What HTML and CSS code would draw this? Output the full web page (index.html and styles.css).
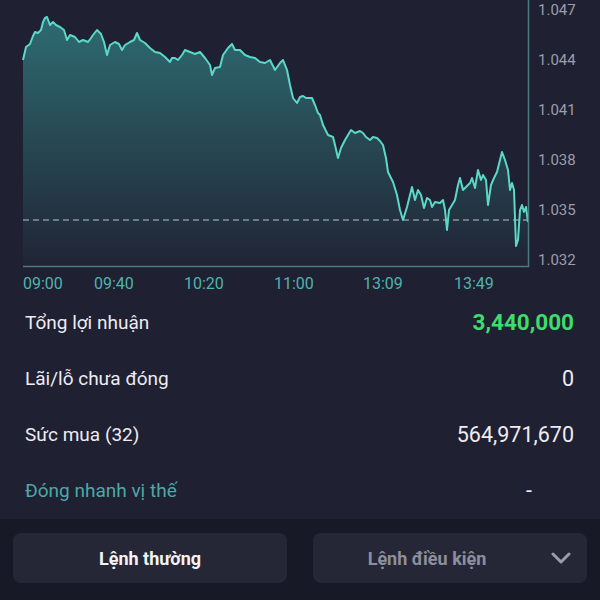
FILE: index.html
```html
<!DOCTYPE html>
<html lang="vi">
<head>
<meta charset="UTF-8" />
<meta name="viewport" content="width=device-width, initial-scale=1" />
<title>Tài sản</title>
<link rel="stylesheet" href="styles.css">
</head>
<body>

<div class="chart">
  <svg class="chart-svg" width="600" height="294" viewBox="0 0 600 294">
    <defs>
      <linearGradient id="areaFill" gradientUnits="userSpaceOnUse" x1="0" y1="17" x2="0" y2="267">
        <stop offset="0" stop-color="#3aa9a6" stop-opacity="0.55" />
        <stop offset="1" stop-color="#3aa9a6" stop-opacity="0.03" />
      </linearGradient>
    </defs>
    <path id="area" fill="url(#areaFill)" d="" />
    <line class="ref-line" x1="23" y1="220" x2="528" y2="220" />
    <path id="line" class="price-line" d="" />
    <line class="axis-line" x1="23" y1="266.5" x2="529" y2="266.5" />
    <line class="axis-line" x1="528.5" y1="0" x2="528.5" y2="267" />

    <text class="axis-y" x="538" y="15">1.047</text>
    <text class="axis-y" x="538" y="65">1.044</text>
    <text class="axis-y" x="538" y="115">1.041</text>
    <text class="axis-y" x="538" y="165">1.038</text>
    <text class="axis-y" x="538" y="215">1.035</text>
    <text class="axis-y" x="538" y="265">1.032</text>

    <text class="axis-x" x="23" y="289">09:00</text>
    <text class="axis-x" x="94" y="289">09:40</text>
    <text class="axis-x" x="184" y="289">10:20</text>
    <text class="axis-x" x="274" y="289">11:00</text>
    <text class="axis-x" x="363" y="289">13:09</text>
    <text class="axis-x" x="454" y="289">13:49</text>
  </svg>
</div>

<div class="stats">
  <div class="row">
    <span class="label">Tổng lợi nhuận</span>
    <span class="value profit">3,440,000</span>
  </div>
  <div class="row">
    <span class="label">Lãi/lỗ chưa đóng</span>
    <span class="value">0</span>
  </div>
  <div class="row">
    <span class="label">Sức mua (32)</span>
    <span class="value">564,971,670</span>
  </div>
  <div class="row">
    <span class="label link">Đóng nhanh vị thế</span>
    <span class="value dash">-</span>
  </div>
</div>

<div class="footer">
  <button class="btn btn-main">Lệnh thường</button>
  <button class="btn btn-cond">
    <span class="btn-text">Lệnh điều kiện</span>
    <svg class="chevron" width="20" height="12" viewBox="0 0 20 12">
      <path d="M2 2 L10 10 L18 2" />
    </svg>
  </button>
</div>

<script>
  // puntos del gráfico (x, y)
  const pts = [
    [23,60],[26,47],[30,44],[33,36],[35,32],[38,33],[41,30],[43,22],[45,18],[47,17],
    [50,25],[53,22],[56,25],[60,27],[64,30],[67,40],[70,35],[75,37],[79,42],[83,40],
    [88,42],[91,38],[93,35],[97,30],[101,34],[104,42],[107,55],[110,45],[115,42],[119,44],
    [122,50],[125,45],[130,42],[134,40],[137,33],[140,40],[145,43],[150,48],[155,52],[160,53],
    [165,57],[170,62],[172,58],[175,58],[178,60],[182,55],[185,50],[190,52],[195,54],[200,52],
    [205,58],[210,65],[212,75],[215,68],[220,67],[223,55],[228,48],[232,44],[235,50],[240,50],
    [245,55],[250,57],[255,58],[260,62],[265,63],[270,60],[275,70],[280,63],[283,60],[287,70],
    [290,85],[293,98],[297,103],[300,97],[303,96],[306,98],[312,98],[315,105],[318,113],[320,115],
    [323,125],[328,135],[333,137],[335,145],[338,158],[341,148],[345,140],[348,135],[351,130],[355,133],
    [360,131],[363,133],[366,137],[370,140],[373,137],[377,138],[380,141],[383,145],[386,158],[388,172],
    [393,182],[397,195],[400,210],[403,220],[407,207],[410,195],[412,187],[415,200],[418,190],[421,195],
    [424,208],[427,198],[430,200],[432,207],[435,202],[440,203],[443,200],[445,210],[447,230],[449,210],
    [452,205],[455,200],[458,185],[460,178],[463,190],[466,187],[470,183],[472,178],[475,188],[478,170],
    [481,180],[483,175],[486,180],[488,205],[491,185],[494,178],[497,172],[500,160],[502,152],[505,160],
    [508,170],[510,190],[512,183],[514,190],[516,246],[518,240],[520,210],[522,205],[524,212],[526,207],
    [528,222]
  ];
  const d = pts.map((p, i) => (i ? 'L' : 'M') + p[0] + ',' + p[1]).join(' ');
  document.getElementById('line').setAttribute('d', d);
  document.getElementById('area').setAttribute('d', d + ' L528,267 L23,267 Z');
</script>

</body>
</html>
```

FILE: styles.css
```css
body {
  font-family: Roboto, "Noto Sans", sans-serif;
  background: #1f2031;
  color: #ececf1;
  margin: 0; padding: 0;
  width: 600px;
  height: 600px;
  overflow: hidden;
}
.chart-svg {
  display: block;
}
.price-line {
  fill: none;
  stroke: #5cd8c8;
  stroke-width: 2;
  stroke-linejoin: round;
}
.ref-line {
  stroke: #b9c6c8;
  stroke-width: 1.2;
  stroke-dasharray: 6 4;
}
.axis-line {
  stroke: #4b7a80;
  stroke-width: 1.5;
}
.axis-y {
  fill: #9d9dab;
  font-size: 15px;
}
.axis-x {
  fill: #4fb3b0;
  font-size: 16px;
}
.stats {
  padding: 0 26px 0 25px;
}
.row {
  display: flex;
  justify-content: space-between;
  align-items: center;
  height: 56px;
}
.row:last-child {
  height: 57px;
}
.label {
  font-size: 19px;
}
.label.link {
  color: #4ea8a5;
}
.value {
  font-size: 21.5px;
}
.value.profit {
  color: #3ddc6c;
  font-weight: bold;
  font-size: 22.5px;
}
.value.dash {
  margin-right: 42px;
}
.footer {
  background: #181926;
  display: flex;
  gap: 26px;
  padding: 14px 13px;
  height: 81px;
  box-sizing: border-box;
}
.btn {
  flex: none;
  width: 274px;
  height: 50px;
  border: none;
  border-radius: 8px;
  background: #262736;
  font-family: Roboto, sans-serif;
  font-size: 18px;
  font-weight: bold;
  cursor: pointer;
}
.btn-main {
  color: #f2f2f5;
}
.btn-cond {
  display: flex;
  align-items: center;
  padding: 0 16px 0 0;
  color: #8e8e9c;
}
.btn-text {
  flex: 1;
  text-align: center;
}
.chevron {
  margin-left: 10px;
}
.chevron path {
  fill: none;
  stroke: #9c9caa;
  stroke-width: 3;
  stroke-linecap: round;
  stroke-linejoin: round;
}
```
